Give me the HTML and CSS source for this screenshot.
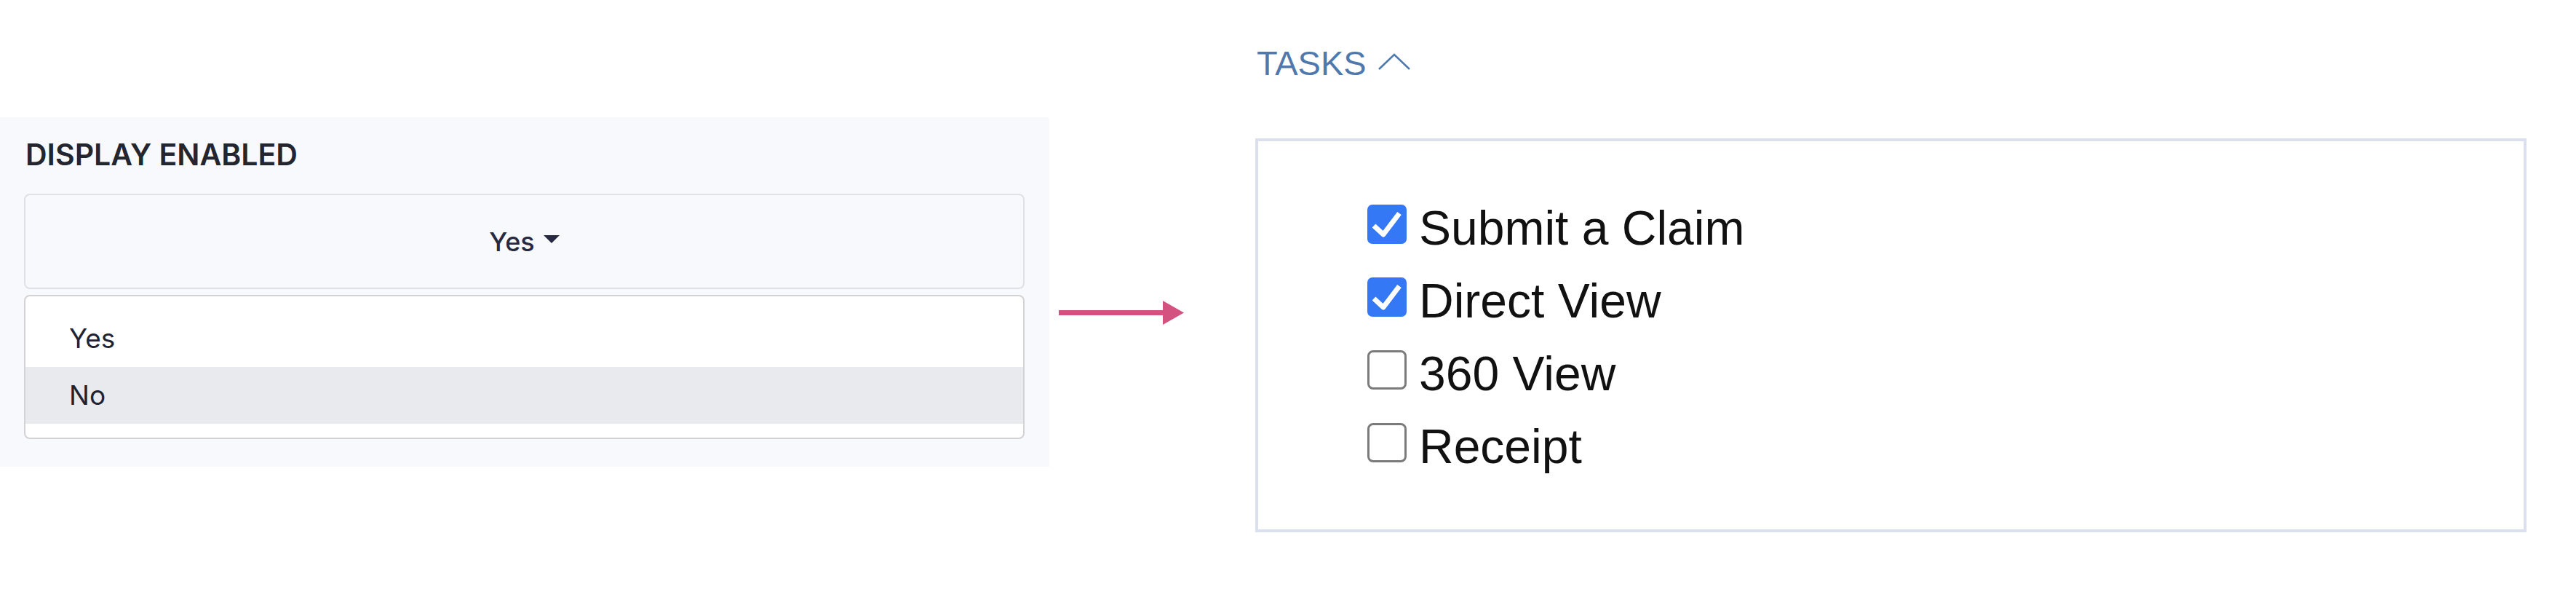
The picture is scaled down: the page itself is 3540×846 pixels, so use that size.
FILE: index.html
```html
<!DOCTYPE html>
<html lang="en">
<head>
    <meta charset="UTF-8">
    <title>Display Enabled to Tasks</title>
    <link rel="stylesheet" href="styles.css">
</head>
<body>
    <div class="page">
        <div class="settings">
            <div class="field-label">DISPLAY ENABLED</div>
            <div class="select">
                <span>Yes</span>
                <span class="caret"></span>
            </div>
            <ul class="options">
                <li>Yes</li>
                <li class="hover">No</li>
            </ul>
        </div>

        <svg class="arrow" width="172" height="33" viewBox="0 0 172 33">
            <rect x="0" y="13" width="144" height="7" fill="#d4527f"/>
            <polygon points="143,0 172,16.5 143,33" fill="#d4527f"/>
        </svg>

        <div class="tasks">
            <div class="tasks-title">
                TASKS
                <svg class="chevron" width="44" height="24" viewBox="0 0 44 24">
                    <polyline points="1,22 22,2 43,22" fill="none" stroke="#4f79ad" stroke-width="2.5"/>
                </svg>
            </div>
            <div class="tasks-box">
                <label class="task">
                    <span class="box checked">
                        <svg width="54" height="54" viewBox="0 0 54 54"><polyline points="9,29 22,41 44,12" fill="none" stroke="#fff" stroke-width="7" stroke-linejoin="round"/></svg>
                    </span>
                    <span class="task-name">Submit a Claim</span>
                </label>
                <label class="task">
                    <span class="box checked">
                        <svg width="54" height="54" viewBox="0 0 54 54"><polyline points="9,29 22,41 44,12" fill="none" stroke="#fff" stroke-width="7" stroke-linejoin="round"/></svg>
                    </span>
                    <span class="task-name">Direct View</span>
                </label>
                <label class="task">
                    <span class="box"></span>
                    <span class="task-name">360 View</span>
                </label>
                <label class="task">
                    <span class="box"></span>
                    <span class="task-name">Receipt</span>
                </label>
            </div>
        </div>
    </div>
</body>
</html>
```

FILE: styles.css
```css
body {
    margin: 0;
    background: #fff;
    font-family: "Liberation Sans", Arial, sans-serif;
}
.page {
    display: flex;
    align-items: flex-start;
}

/* left: dropdown field */
.settings {
    width: 1442px;
    height: 480px;
    margin-top: 161px;
    padding: 26px 34px 0 33px;
    box-sizing: border-box;
    background: #f8f9fc;
    font-family: Inter, "Noto Sans", sans-serif;
}
.field-label {
    margin-left: 2px;
    font-size: 41px;
    font-weight: 600;
    line-height: 50px;
    color: #23252f;
}
.select {
    margin-top: 29px;
    height: 131px;
    display: flex;
    align-items: center;
    justify-content: center;
    gap: 12px;
    border: 2px solid #dfe1e8;
    border-radius: 8px;
    box-sizing: border-box;
    font-size: 36px;
    font-weight: 500;
    color: #262940;
}
.caret {
    width: 0;
    height: 0;
    margin-top: -6px;
    border-left: 11px solid transparent;
    border-right: 11px solid transparent;
    border-top: 11px solid #262940;
}
.options {
    list-style: none;
    margin: 8px 0 0;
    padding: 19px 0;
    background: #fff;
    border: 2px solid #d3d3d6;
    border-radius: 8px;
}
.options li {
    height: 78px;
    line-height: 78px;
    padding-left: 60px;
    font-size: 37px;
    color: #1f2230;
}
.options li.hover {
    background: #e9eaee;
}

/* arrow */
.arrow {
    margin: 413px 0 0 13px;
    display: block;
}

/* right: tasks */
.tasks {
    margin-left: 98px;
    width: 1747px;
}
.tasks-title {
    margin-top: 60px;
    padding-left: 2px;
    display: flex;
    align-items: center;
    gap: 16px;
    font-size: 47px;
    line-height: 53px;
    color: #4f79ad;
}
.chevron {
    margin-top: -4px;
}
.tasks-box {
    margin-top: 77px;
    height: 541px;
    padding: 64px 0 0 150px;
    box-sizing: border-box;
    border: 4px solid #dcdfee;
}
.task {
    display: flex;
    align-items: center;
    gap: 17px;
    height: 100px;
}
.box {
    width: 54px;
    height: 54px;
    box-sizing: border-box;
    border: 3px solid #7b7b7b;
    border-radius: 8px;
    background: #fff;
}
.box.checked {
    border: none;
    border-radius: 7px;
    background: #3478f6;
}
.box svg {
    display: block;
}
.task-name {
    margin-top: 10px;
    font-size: 66px;
    color: #111;
}
```
